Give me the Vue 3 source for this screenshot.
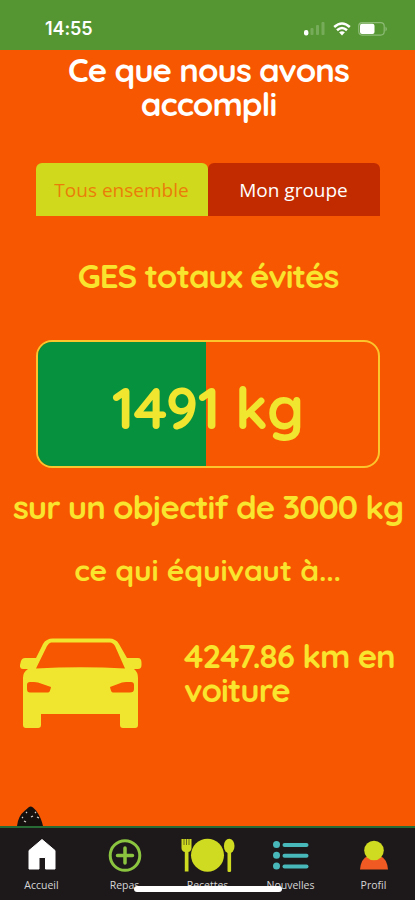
<template>
  <div class="screen">
    <header class="status">
      <span class="time">14:55</span>
      <div class="indicators">
        <svg class="signal" width="22" height="15" viewBox="0 0 22 15">
          <rect x="0" y="9" width="4.4" height="5.5" rx="2" fill="#fff" />
          <rect x="6.5" y="7" width="3" height="7" rx="1" fill="#76ab5a" />
          <rect x="12" y="4" width="3" height="10" rx="1" fill="#76ab5a" />
          <rect x="17.5" y="1" width="3" height="13" rx="1" fill="#76ab5a" />
        </svg>
        <svg class="wifi" width="18" height="14" viewBox="0 0 18 14">
          <path d="M1.2 5Q9-2 16.8 5M4 8.2q5-4.4 10 0" fill="none" stroke="#fff" stroke-width="2.5" />
          <path d="M6.1 10.3q2.9-2.2 5.8 0L9 13.5z" fill="#fff" />
        </svg>
        <svg class="battery" width="30" height="14" viewBox="0 0 30 14">
          <rect x=".7" y=".7" width="25.5" height="12.4" rx="3.5" fill="none" stroke="#8dbb76" stroke-width="1.2" />
          <rect x="2" y="1.8" width="14.5" height="10.2" rx="2" fill="#fff" />
          <path d="M27.5 4.5q2.8 2.5 0 5z" fill="#8dbb76" />
        </svg>
      </div>
    </header>

    <main class="content">
      <h1>Ce que nous avons<br />accompli</h1>

      <div class="tabs">
        <button
          v-for="tab in tabs"
          :key="tab.id"
          :class="{ active: currentTab === tab.id }"
          @click="currentTab = tab.id"
        >{{ tab.label }}</button>
      </div>

      <h2>GES totaux évités</h2>

      <div class="gauge">
        <div class="gauge-fill" :style="{ width: percent + '%' }"></div>
        <span class="gauge-value">{{ saved }} kg</span>
      </div>

      <p class="goal">sur un objectif de {{ goal }} kg</p>
      <p class="equals">ce qui équivaut à...</p>

      <div class="equivalent">
        <svg class="car" width="122" height="92" viewBox="0 0 122 92">
          <path
            fill="#f1e62f"
            fill-rule="evenodd"
            d="M33 0.5H89Q96 0.5 99 6L107 20H118Q121.500 20 121.500 25V27Q121.500 31 118 31H114Q118 34 118 40V87Q118 90 115 90H103Q100 90 100 87V76H21V87Q21 90 18 90H6Q3 90 3 87V40Q3 34 8 31H3Q-.5 31 0 27L1 23Q2 20 5 20H16L23 6Q26 0.500 33 0.500ZM31 4.500Q29 4.500 27 8L16 30.500Q61 28 105 30.500L95 8Q93 4.500 90 4.500ZM10 44Q7 44 7 47V51Q7 54.500 10 54.500H28Q30 54.500 31 49L18 44.500Q16 44 14 44ZM111 44H106Q104 44 102 44.500L90 49Q91 54.500 93 54.500H110Q114 54.500 114 51V47Q114 44 111 44Z"
          />
        </svg>
        <p>4247.86 km en<br />voiture</p>
      </div>

      <svg class="berry" width="27" height="20" viewBox="0 0 27 20">
        <path d="M0 20Q1 10 8 4.500L12 1Q14 0 16 1.500L19 4.500Q24 11 26 20Z" fill="#16110f" />
        <path d="M7 15l2 1M14 11l2-1M20 11l2 1M9 7l1-1M18 6l1 1M5 12l1-1" stroke="#d8d4cc" stroke-width="1.3" />
      </svg>
    </main>

    <nav class="bottom">
      <a>
        <svg width="28" height="34" viewBox="0 0 28 34">
          <path d="M14 1.500L27 12.500V31H17.500V19.500H11V31H1V12.500Z" fill="#fff" stroke="#fff" stroke-width="1" stroke-linejoin="round" />
        </svg>
        <span>Accueil</span>
      </a>
      <a>
        <svg width="34" height="34" viewBox="0 0 34 34" fill="none" stroke="#8bc540">
          <circle cx="17" cy="17.5" r="14.8" stroke-width="3" />
          <path d="M17 10v15M9.500 17.500h15" stroke-width="3.5" stroke-linecap="round" />
        </svg>
        <span>Repas</span>
      </a>
      <a>
        <svg width="54" height="34" viewBox="0 0 54 34" fill="#cfdb20">
          <path d="M.5 1H10.500V10Q10.500 13 7.500 14V33.500H3.800V14Q.5 13 .5 10Z" />
          <path d="M3 1v6M5.500 1v6M8 1v6" stroke="#5d621d" stroke-width=".9" />
          <circle cx="26.5" cy="17.2" r="16.5" />
          <ellipse cx="48.2" cy="8" rx="5.3" ry="7.3" />
          <rect x="46.5" y="13" width="3.6" height="21" rx="1.3" />
        </svg>
        <span>Recettes</span>
      </a>
      <a>
        <svg width="36" height="34" viewBox="0 0 36 34" fill="#48b8ba">
          <circle cx="3.5" cy="6.5" r="3.5" />
          <circle cx="3.5" cy="17.2" r="3.5" />
          <circle cx="3.5" cy="28" r="3.5" />
          <rect x="9.5" y="5" width="26" height="4" rx="2" />
          <rect x="9.5" y="15.8" width="26" height="4" rx="2" />
          <rect x="9.5" y="26.5" width="26" height="4" rx="2" />
        </svg>
        <span>Nouvelles</span>
      </a>
      <a>
        <svg width="28" height="34" viewBox="0 0 28 34">
          <path d="M0 31.500Q1 20.500 8 18H20Q27 20.500 28 31.500Z" fill="#f15a22" />
          <circle cx="14" cy="12.5" r="9.8" fill="#cfdb20" />
        </svg>
        <span>Profil</span>
      </a>
      <div class="home-indicator"></div>
    </nav>
  </div>
</template>

<script setup>
import { ref, computed } from 'vue'

const tabs = [
  { id: 'ensemble', label: 'Tous ensemble' },
  { id: 'groupe', label: 'Mon groupe' },
]
const currentTab = ref('ensemble')

const saved = ref(1491)
const goal = ref(3000)
const percent = computed(() => (saved.value / goal.value) * 100)
</script>

<style>
body {
  margin: 0;
}
</style>

<style scoped>
.screen {
  width: 415px;
  height: 900px;
  display: flex;
  flex-direction: column;
  overflow: hidden;
  background: #f75700;
  font-family: Quicksand, Lato, sans-serif;
}

.status {
  height: 50px;
  flex: none;
  box-sizing: border-box;
  padding: 7px 27px 0 45px;
  display: flex;
  align-items: center;
  justify-content: space-between;
  background: #569632;
}

.time {
  color: #fff;
  font: 600 18px/22px Inter, sans-serif;
  letter-spacing: -0.1px;
}

.indicators {
  display: flex;
  align-items: center;
  gap: 7px;
}

.content {
  flex: 1;
  display: flex;
  flex-direction: column;
  align-items: center;
  color: #f9e52d;
}

h1, h2, p {
  margin: 0;
  font-weight: 700;
  letter-spacing: -1px;
  white-space: nowrap;
}

h1 {
  margin-top: 3px;
  padding-left: 2px;
  color: #fff;
  font-size: 33px;
  line-height: 34px;
  text-align: center;
}

.tabs {
  width: 344px;
  height: 53px;
  margin-top: 42px;
  display: flex;
}

.tabs button {
  flex: 1;
  padding: 0;
  border: 0;
  border-radius: 6px 6px 0 0;
  background: #c22b00;
  color: #fff;
  font: 400 19px "Open Sans", sans-serif;
  white-space: nowrap;
}

.tabs button.active {
  background: #d0d91c;
  color: #ea7d09;
}

h2 {
  margin-top: 40px;
  padding-left: 1px;
  font-size: 33px;
  line-height: 40px;
}

.gauge {
  position: relative;
  width: 344px;
  height: 128px;
  margin-top: 44px;
  box-sizing: border-box;
  border: 2px solid #fbc52b;
  border-radius: 16px;
  overflow: hidden;
  display: flex;
}

.gauge-fill {
  background: #06913f;
}

.gauge-value {
  position: absolute;
  inset: 0;
  padding-top: 4px;
  color: #f1e62f;
  font-size: 58px;
  font-weight: 700;
  line-height: 124px;
  letter-spacing: -0.8px;
  text-align: center;
}

.goal {
  margin-top: 19px;
  padding-left: 1px;
  font-size: 33px;
  line-height: 40px;
}

.equals {
  margin-top: 25px;
  font-size: 30px;
  line-height: 36px;
  letter-spacing: -0.15px;
}

.equivalent {
  align-self: stretch;
  margin-top: 50px;
  padding-left: 20px;
  display: flex;
  gap: 42px;
}

.equivalent p {
  margin-top: 1px;
  font-size: 33px;
  line-height: 34px;
}

.berry {
  align-self: flex-start;
  margin: auto 0 0 17px;
}

.bottom {
  position: relative;
  flex: none;
  height: 74px;
  box-sizing: border-box;
  padding: 10px 0 0;
  border-top: 2px solid #286b35;
  display: flex;
  background: #1d191b;
}

.bottom a {
  flex: 1;
  display: flex;
  flex-direction: column;
  align-items: center;
  gap: 6px;
  color: #d6d6d6;
  font: 10.5px/14px "Open Sans", sans-serif;
}

.home-indicator {
  position: absolute;
  left: 134px;
  bottom: 8px;
  width: 148px;
  height: 6px;
  border-radius: 3px;
  background: #fff;
}
</style>
